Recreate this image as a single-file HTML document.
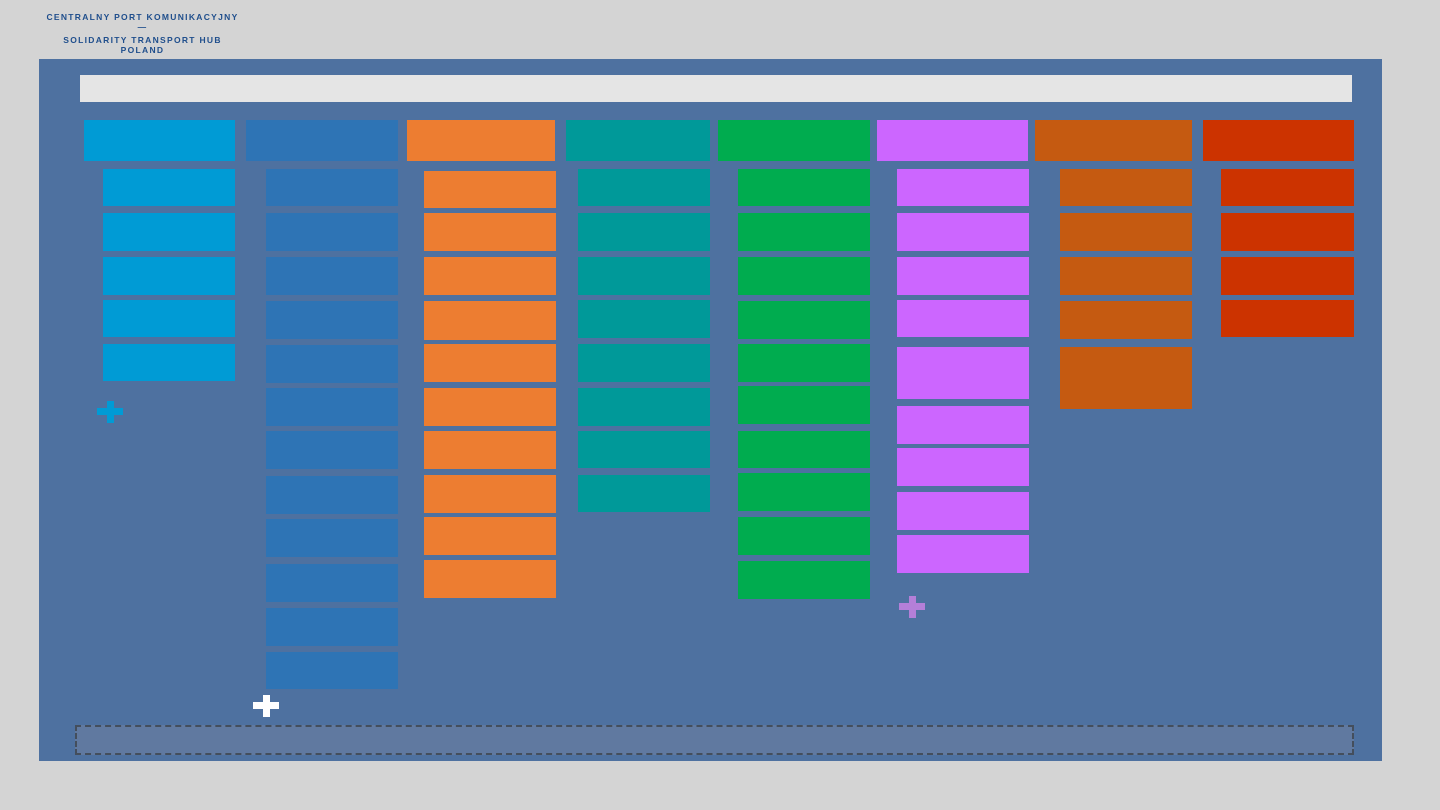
<!DOCTYPE html>
<html><head><meta charset="utf-8"><style>
body{margin:0;width:1440px;height:810px;background:#d4d4d4;position:relative;overflow:hidden;font-family:"Liberation Sans",sans-serif}
.b{position:absolute}
.logo{position:absolute;left:40px;width:205px;text-align:center;color:#1f4e8c;font-weight:bold;font-size:8.5px;letter-spacing:1.3px;line-height:10px}
.plus{position:absolute;width:26px;height:22px}
.plus:before,.plus:after{content:"";position:absolute;background:var(--c)}
.plus:before{left:0;top:7px;width:26px;height:7px}
.plus:after{left:10px;top:0;width:7px;height:22px}
</style></head><body>
<div class="logo" style="top:12px">CENTRALNY PORT KOMUNIKACYJNY</div>
<div class="logo" style="top:22px">—</div>
<div class="logo" style="top:35px">SOLIDARITY TRANSPORT HUB<br>POLAND</div>
<div class="b" style="left:39px;top:59px;width:1343px;height:702px;background:#4e71a0"></div>
<div class="b" style="left:80px;top:75px;width:1272px;height:27px;background:#e5e5e5"></div>
<div class="b" style="left:75px;top:725px;width:1275px;height:26px;background:#6079a0;border:2px dashed #444e5c"></div>
<div id="c"></div>
<div class="plus" style="left:97px;top:401px;--c:#009bd5"></div>
<div class="plus" style="left:253px;top:695px;--c:#fff"></div>
<div class="plus" style="left:899px;top:596px;--c:#b47fd8"></div>
<script>
var cols=[
["#009bd5",84,235,103,[[169,206],[213,251],[257,295],[300,337],[344,381]]],
["#2e74b5",246,398,266,[[169,206],[213,251],[257,295],[301,339],[345,383],[388,426],[431,469],[476,514],[519,557],[564,602],[608,646],[652,689]]],
["#ed7d31",407,555,424,[[171,208],[213,251],[257,295],[301,340],[344,382],[388,426],[431,469],[475,513],[517,555],[560,598]]],
["#009999",566,710,578,[[169,206],[213,251],[257,295],[300,338],[344,382],[388,426],[431,468],[475,512]]],
["#00ac4f",718,870,738,[[169,206],[213,251],[257,295],[301,339],[344,382],[386,424],[431,468],[473,511],[517,555],[561,599]]],
["#cc66ff",877,1028,897,[[169,206],[213,251],[257,295],[300,337],[347,399],[406,444],[448,486],[492,530],[535,573]]],
["#c55a11",1035,1192,1060,[[169,206],[213,251],[257,295],[301,339],[347,409]]],
["#cc3300",1203,1354,1221,[[169,206],[213,251],[257,295],[300,337]]]];
var h="";
cols.forEach(function(c){
h+='<div class="b" style="left:'+c[1]+'px;top:120px;width:'+(c[2]-c[1])+'px;height:41px;background:'+c[0]+'"></div>';
var r=c[2];if(c[0]=="#ed7d31")r=556;if(c[0]=="#cc66ff")r=1029;
c[4].forEach(function(y){h+='<div class="b" style="left:'+c[3]+'px;top:'+y[0]+'px;width:'+(r-c[3])+'px;height:'+(y[1]-y[0])+'px;background:'+c[0]+'"></div>';});
});
document.getElementById("c").innerHTML=h;
</script>
</body></html>
